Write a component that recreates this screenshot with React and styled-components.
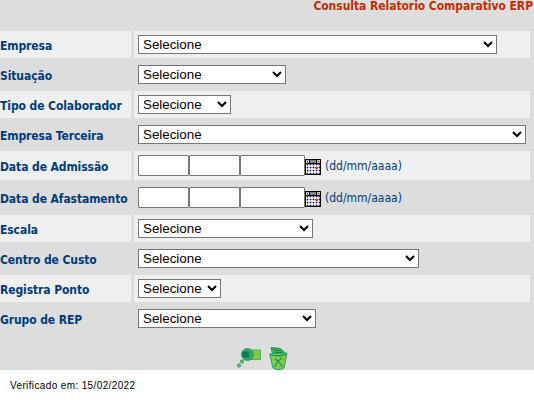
import React from "react";
import styled, { createGlobalStyle } from "styled-components";

const GlobalStyle = createGlobalStyle`
  body { margin: 0; background: #fff; overflow: hidden; }
  * { box-sizing: border-box; }
`;

const Page = styled.main`
  width: 534px;
  height: 400px;
  font-family: "DejaVu Sans Condensed", "DejaVu Sans", sans-serif;
  font-stretch: condensed;
  font-size: 12px;
  color: #003c7c;
`;

const Panel = styled.form`
  height: 370px;
  background: #ddd;
`;

const Title = styled.h1`
  margin: 0;
  height: 31px;
  padding-right: 1px;
  font-size: 12px;
  line-height: 13px;
  font-weight: bold;
  letter-spacing: -0.05px;
  text-align: right;
  white-space: nowrap;
  color: #c42d00;
`;

const Rows = styled.div`
  display: grid;
  grid-template-columns: 131px 396px;
  gap: 3px;
`;

const Label = styled.label`
  height: ${(p) => p.$height}px;
  padding-top: 3px;
  line-height: ${(p) => p.$height - 2}px;
  font-weight: bold;
  letter-spacing: -0.09px;
  white-space: nowrap;
  background: ${(p) => (p.$light ? "#efefef" : "#ddd")};
`;

const Field = styled.div`
  display: flex;
  align-items: flex-start;
  height: ${(p) => p.$height}px;
  padding: 4px 0 0 4px;
  background: ${(p) => (p.$light ? "#efefef" : "#ddd")};
`;

const Select = styled.select`
  width: ${(p) => p.$width}px;
  height: 19px;
  margin: 0;
  font: 13.333px "Liberation Sans", Arial, sans-serif;
  color: #000;
  background: #fff;
`;

const DateInput = styled.input`
  width: ${(p) => p.$width}px;
  height: 21px;
  margin: 0;
  padding: 1px 2px;
  border: 1px solid #767676;
  border-radius: 1px;
  background: #fff;
`;

const Calendar = styled.svg`
  display: block;
  flex: none;
  margin-top: 4px;
`;

const Hint = styled.span`
  margin-left: 4px;
  padding-top: 1px;
  line-height: 21px;
`;

const Actions = styled.div`
  display: flex;
  gap: 8px;
  padding: 14px 0 0 236px;
`;

const ActionIcon = styled.svg`
  display: block;
`;

const Footer = styled.footer`
  padding: 10px 0 0 10px;
  font: 10px/12px "Liberation Sans", Arial, sans-serif;
  letter-spacing: 0.37px;
  color: #000;
`;

const fields = [
  { label: "Empresa", width: 359 },
  { label: "Situação", width: 148 },
  { label: "Tipo de Colaborador", width: 93 },
  { label: "Empresa Terceira", width: 388 },
  { label: "Data de Admissão", date: true },
  { label: "Data de Afastamento", date: true },
  { label: "Escala", width: 175 },
  { label: "Centro de Custo", width: 281 },
  { label: "Registra Ponto", width: 83 },
  { label: "Grupo de REP", width: 178 },
];

const columns = [1, 4, 7, 10, 13];
const lines = [5, 8, 11, 14];

function CalendarIcon() {
  return (
    <Calendar width="16" height="16" viewBox="0 0 16 16" shapeRendering="crispEdges">
      <path fill="#000" d="M0 0h16v16H0z" />
      <path fill="#c8c8c8" d="M1 1h3v3H1zM12 1h3v3h-3z" />
      <path fill="#808080" d="M5 1h6v3H5z" />
      <path fill="#000" d="M2 2h1v1H2zM13 2h1v1h-1z" />
      <path fill="#fff" d="M1 5h14v10H1z" />
      {lines.map((y) => (
        <path key={y} fill="#a8a8a8" d={`M1 ${y}h14v1H1z`} />
      ))}
      {columns.map((x) => (
        <path key={x} fill="#a8a8a8" d={`M${x + 1} 5h1v10h-1z`} />
      ))}
      {lines.map((y) =>
        columns.map((x) => (
          <path key={`${x}-${y}`} fill="#0000f0" d={`M${x + 1} ${y}h1v1h-1z`} />
        ))
      )}
      <path fill="#f22" d="M10 8h3v2h-3z" />
      <path fill="#f80" d="M10 9h1v1h-1z" />
    </Calendar>
  );
}

export default function App() {
  return (
    <Page>
      <GlobalStyle />
      <Panel>
        <Title>Consulta Relatorio Comparativo ERP</Title>
        <Rows>
          {fields.map((f, i) => {
            const height = f.date ? 29 : 27;
            const light = i % 2 === 0;
            return (
              <React.Fragment key={f.label}>
                <Label $height={height} $light={light}>
                  {f.label}
                </Label>
                <Field $height={height} $light={light}>
                  {f.date ? (
                    <>
                      <DateInput $width={51} />
                      <DateInput $width={51} />
                      <DateInput $width={65} />
                      <CalendarIcon />
                      <Hint>(dd/mm/aaaa)</Hint>
                    </>
                  ) : (
                    <Select $width={f.width}>
                      <option>Selecione</option>
                    </Select>
                  )}
                </Field>
              </React.Fragment>
            );
          })}
        </Rows>
        <Actions>
          <ActionIcon width="25" height="24" viewBox="0 0 25 24">
            <path d="M11 4h13.5v9.5H11z" fill="#80c84c" stroke="#4cb464" />
            <circle cx="11.5" cy="8.5" r="6" fill="#35a852" stroke="#28a078" />
            <path d="M6.5 5.5H13v6H6.5z" fill="#087c58" />
            <circle cx="6" cy="15.500" r="1.6" fill="#76c34c" stroke="#20a068" />
            <circle cx="3" cy="19.500" r="1.6" fill="#76c34c" stroke="#20a068" />
          </ActionIcon>
          <ActionIcon width="20" height="24" viewBox="0 0 20 24">
            <path d="M2 1.5l9 1 4 3v4H4z" fill="#54b84c" stroke="#16945c" />
            <path d="M4 3.5l8 1.5M5 6l8 1" stroke="#08794d" />
            <path d="M.7 8L18 7l-3 15-3 1.5H7L4 22z" fill="#80ca4a" stroke="#23a568" />
            <path d="M1 8.5c5 2 12 2 16-.5M5.5 21l3.5-6 4.5 6M6 13l3 2 4-3" fill="none" stroke="#13935b" strokeWidth="1.2" />
          </ActionIcon>
        </Actions>
      </Panel>
      <Footer>Verificado em: 15/02/2022</Footer>
    </Page>
  );
}
